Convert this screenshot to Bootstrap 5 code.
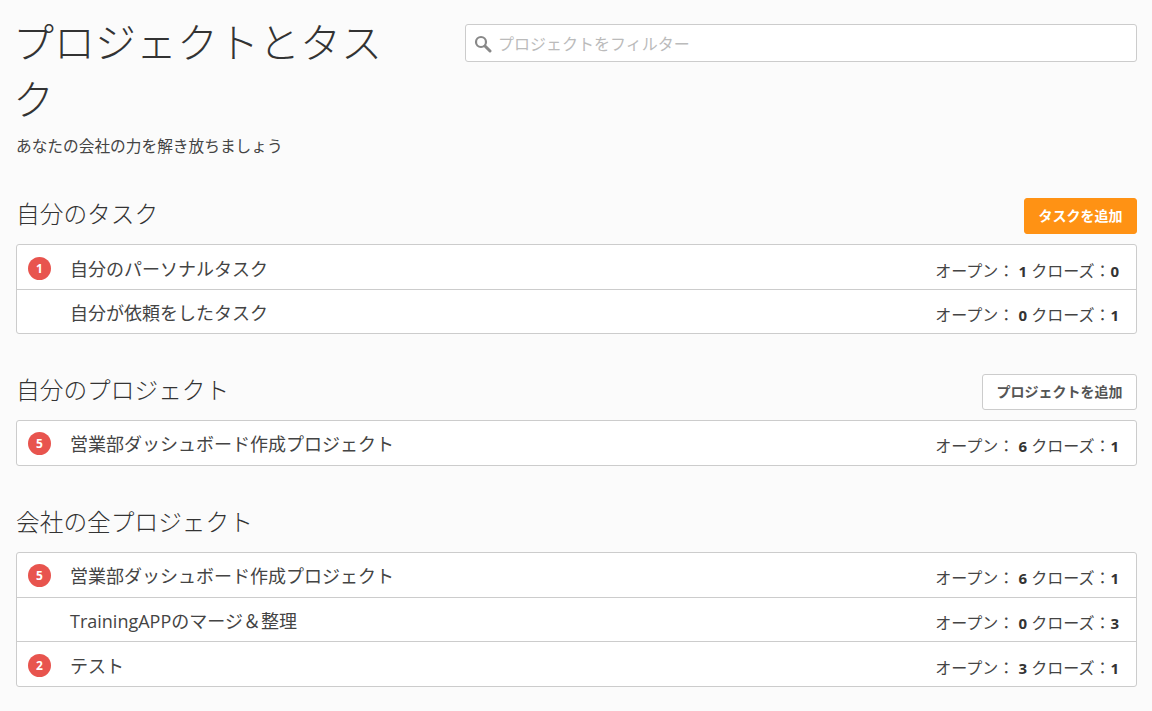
<!DOCTYPE html>
<html lang="ja"><head><meta charset="utf-8">
<link href="https://cdn.jsdelivr.net/npm/bootstrap@5.3.0/dist/css/bootstrap.min.css" rel="stylesheet">
<style>
body{background:#fbfbfb;color:#333;font-family:"Open Sans","Noto Sans CJK JP",sans-serif;font-size:14px;height:711px;overflow:hidden}
.pg{padding:14px 15px 0 16px}
.hd-title{width:400px;height:174px}
.hd-title h1{font-size:41px;line-height:57px;font-weight:300;margin:0 0 0 -3px;color:#333;width:385px}
.hd-title p{margin:7px 0 0;font-size:15.7px;line-height:22px;color:#444}
.srch{margin:10px 0 0 49px;height:38px;border:1px solid #ccc;border-radius:3px;background:#fff;color:#bbb;font-size:16px;padding:1px 7px 0 8px;flex:1;gap:6px}
.sec-hd{height:36px;margin-top:39.6px}
.sec-hd.first{margin-top:10px}
.sec-hd.third{margin-top:40px}
.sec-h{font-size:23.7px;font-weight:300;margin:0 0 4px;color:#333;line-height:30px}
.bt{font-size:14px;font-weight:700;border-radius:3px;padding:0 13.5px;height:36px;line-height:34px}
.bt-o{background:#ff9214;border:1px solid #ff9214;color:#fff}
.bt-w{background:#fff;border:1px solid #ccc;color:#555}
.lst{border:1px solid #ccc;border-radius:3px;background:#fff;margin-top:10px}
.rw{height:44px;padding:0 17px 0 11px}
.rw+.rw{height:44.4px;border-top:1px solid #ccc}
.bdg{width:23px;height:23px;border-radius:50%;background:#e8544e;color:#fff;font-size:12px;font-weight:700;line-height:23px;text-align:center;margin-right:19px;flex:none;margin-top:2px}
.bdg0{background:none}
.nm{font-size:18px;font-weight:400;color:#444;padding-top:4px}
.st{margin-left:auto;font-family:"Open Sans","Noto Sans CJK TC",sans-serif;font-size:16px;padding-top:7px;color:#444}
.st b{font-weight:700;font-size:15px;color:#333}
</style></head><body>
<div class="pg">
<div class="d-flex">
<div class="hd-title"><h1>プロジェクトとタスク</h1><p>あなたの会社の力を解き放ちましょう</p></div>
<div class="srch d-flex align-items-center"><svg width="18" height="18" viewBox="0 0 18 18"><circle cx="7" cy="7" r="5" fill="none" stroke="#888" stroke-width="2.2"/><path d="M11 11L16 16" stroke="#888" stroke-width="3" stroke-linecap="round"/></svg><span>プロジェクトをフィルター</span></div>
</div>
<div class="sec-hd first d-flex justify-content-between align-items-center"><h2 class="sec-h">自分のタスク</h2><button class="btn bt bt-o">タスクを追加</button></div>
<div class="lst"><div class="rw d-flex align-items-center"><span class="bdg">1</span><span class="nm">自分のパーソナルタスク</span><span class="st">オープン： <b>1</b> クローズ：<b>0</b></span></div><div class="rw d-flex align-items-center"><span class="bdg bdg0"></span><span class="nm">自分が依頼をしたタスク</span><span class="st">オープン： <b>0</b> クローズ：<b>1</b></span></div></div>
<div class="sec-hd d-flex justify-content-between align-items-center"><h2 class="sec-h">自分のプロジェクト</h2><button class="btn bt bt-w">プロジェクトを追加</button></div>
<div class="lst"><div class="rw d-flex align-items-center"><span class="bdg">5</span><span class="nm">営業部ダッシュボード作成プロジェクト</span><span class="st">オープン： <b>6</b> クローズ：<b>1</b></span></div></div>
<div class="sec-hd third d-flex justify-content-between align-items-center"><h2 class="sec-h">会社の全プロジェクト</h2></div>
<div class="lst"><div class="rw d-flex align-items-center"><span class="bdg">5</span><span class="nm">営業部ダッシュボード作成プロジェクト</span><span class="st">オープン： <b>6</b> クローズ：<b>1</b></span></div><div class="rw d-flex align-items-center"><span class="bdg bdg0"></span><span class="nm">TrainingAPPのマージ＆整理</span><span class="st">オープン： <b>0</b> クローズ：<b>3</b></span></div><div class="rw d-flex align-items-center"><span class="bdg">2</span><span class="nm">テスト</span><span class="st">オープン： <b>3</b> クローズ：<b>1</b></span></div></div>
</div>
<script src="https://cdn.jsdelivr.net/npm/bootstrap@5.3.0/dist/js/bootstrap.bundle.min.js"></script>
</body></html>
